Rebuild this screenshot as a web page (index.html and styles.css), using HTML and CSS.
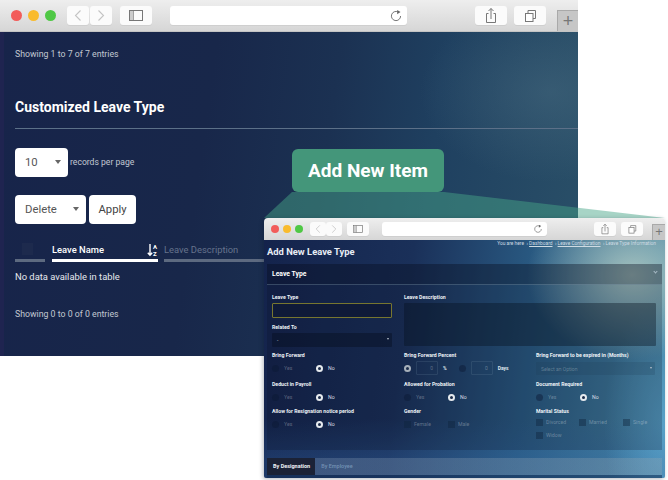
FILE: index.html
```html
<!DOCTYPE html>
<html lang="en">
<head>
<meta charset="utf-8">
<title>Add New Item</title>
<link rel="stylesheet" href="styles.css">
</head>
<body>
<svg class="defs" width="0" height="0" aria-hidden="true">
  <symbol id="i-back" viewBox="0 0 22 19"><path d="M13.5 4.5 8.5 9.5l5 5" fill="none" stroke="#c4c4c4" stroke-width="1.1"/></symbol>
  <symbol id="i-fwd" viewBox="0 0 22 19"><path d="M8.5 4.5l5 5-5 5" fill="none" stroke="#c4c4c4" stroke-width="1.1"/></symbol>
  <symbol id="i-side" viewBox="0 0 32 19"><rect x="9.5" y="4.500" width="13" height="10" fill="none" stroke="#777" stroke-width="1"/><path d="M13.500 4.500v10" stroke="#777"/><path d="M10 5h3.500v9H10z" fill="#ccc"/></symbol>
  <symbol id="i-reload" viewBox="0 0 14 14"><path d="M9.700 3.300A4.600 4.600 0 1 0 11.600 7" fill="none" stroke="#777" stroke-width="1"/><path d="M8.200 1v4.200l3.300-2.300z" fill="#666"/></symbol>
  <symbol id="i-share" viewBox="0 0 32 19"><path d="M13.500 7.500h-2v9h9v-9h-2" fill="none" stroke="#777"/><path d="M16 13V2.500M13.500 5 16 2.500 18.500 5" fill="none" stroke="#777"/></symbol>
  <symbol id="i-tabs" viewBox="0 0 32 19"><rect x="11.500" y="7.500" width="7.500" height="8" fill="#fff" stroke="#777"/><path d="M14 7V4.500h7.500v8H19" fill="none" stroke="#777"/></symbol>
</svg>

<main class="stage">
  <section class="window window-back">
    <header class="chrome">
      <span class="light light-red"></span><span class="light light-amber"></span><span class="light light-green"></span>
      <span class="nav">
        <span class="btn btn-nav"><svg class="ico"><use href="#i-back"/></svg></span>
        <span class="btn btn-nav"><svg class="ico"><use href="#i-fwd"/></svg></span>
      </span>
      <span class="btn btn-side"><svg class="ico"><use href="#i-side"/></svg></span>
      <span class="url"><svg class="reload"><use href="#i-reload"/></svg></span>
      <span class="btn btn-share"><svg class="ico"><use href="#i-share"/></svg></span>
      <span class="btn btn-tabs"><svg class="ico"><use href="#i-tabs"/></svg></span>
      <span class="plus">+</span>
    </header>
    <div class="page">
      <p class="info info-top">Showing 1 to 7 of 7 entries</p>
      <h2 class="section-title">Customized Leave Type</h2>
      <div class="per-page">
        <span class="field field-len">10<i class="caret"></i></span>
        <span class="per-label">records per page</span>
      </div>
      <div class="bulk">
        <span class="field field-bulk">Delete<i class="caret"></i></span>
        <span class="field field-apply">Apply</span>
      </div>
      <div class="table-head">
        <div class="col col-check"><span class="check"></span></div>
        <div class="col col-name">
          <span>Leave Name</span>
          <svg class="sort" viewBox="0 0 11 14"><path d="M3 1v11M.8 9.800 3 12.300l2.200-2.500" fill="none" stroke="#fff" stroke-width="1.400"/><text x="6" y="6" class="sort-text">A</text><text x="6" y="13" class="sort-text">Z</text></svg>
        </div>
        <div class="col col-desc"><span>Leave Description</span></div>
      </div>
      <p class="empty">No data available in table</p>
      <p class="info info-bottom">Showing 0 to 0 of 0 entries</p>
    </div>
  </section>

  <svg class="wedge" viewBox="0 0 668 480" aria-hidden="true"><polygon points="292,192 444,192 665,218 264,218"/></svg>

  <div class="callout">Add New Item</div>

  <section class="window window-front">
    <header class="chrome chrome-sm">
      <span class="light light-red"></span><span class="light light-amber"></span><span class="light light-green"></span>
      <span class="nav">
        <span class="btn btn-nav"><svg class="ico"><use href="#i-back"/></svg></span>
        <span class="btn btn-nav"><svg class="ico"><use href="#i-fwd"/></svg></span>
      </span>
      <span class="btn btn-side"><svg class="ico"><use href="#i-side"/></svg></span>
      <span class="url"><svg class="reload"><use href="#i-reload"/></svg></span>
      <span class="btn btn-share"><svg class="ico"><use href="#i-share"/></svg></span>
      <span class="btn btn-tabs"><svg class="ico"><use href="#i-tabs"/></svg></span>
      <span class="plus">+</span>
    </header>
    <div class="app">
      <div class="app-top">
        <h1 class="app-title">Add New Leave Type</h1>
        <nav class="crumbs">You are here &nbsp;&rsaquo; <u>Dashboard</u> &nbsp;&rsaquo; <u>Leave Configuration</u> &nbsp;&rsaquo; <span>Leave Type Information</span></nav>
      </div>
      <div class="panel">
        <div class="panel-head"><span>Leave Type</span><i class="chev"></i></div>
        <div class="form">
          <div class="cell cell-type">
            <label class="lbl">Leave Type</label>
            <span class="input input-focus"></span>
          </div>
          <div class="cell cell-desc">
            <label class="lbl">Leave Description</label>
            <span class="textarea"></span>
          </div>
          <div class="cell cell-rel">
            <label class="lbl">Related To</label>
            <span class="input input-select">-<i class="caret caret-sm"></i></span>
          </div>

          <div class="cell">
            <label class="lbl">Bring Forward</label>
            <div class="opts opts-radio"><span class="opt"><i class="radio"></i>Yes</span><span class="opt opt-on"><i class="radio on"></i>No</span></div>
          </div>
          <div class="cell">
            <label class="lbl">Bring Forward Percent</label>
            <div class="percent">
              <i class="radio on dim"></i><span class="num">0</span><b>%</b>
              <i class="radio"></i><span class="num">0</span><b>Days</b>
            </div>
          </div>
          <div class="cell">
            <label class="lbl">Bring Forward to be expired in (Months)</label>
            <span class="input input-option">Select an Option<i class="caret caret-sm"></i></span>
          </div>

          <div class="cell">
            <label class="lbl">Deduct in Payroll</label>
            <div class="opts opts-radio"><span class="opt"><i class="radio"></i>Yes</span><span class="opt opt-on"><i class="radio on"></i>No</span></div>
          </div>
          <div class="cell">
            <label class="lbl">Allowed for Probation</label>
            <div class="opts opts-radio"><span class="opt"><i class="radio"></i>Yes</span><span class="opt opt-on"><i class="radio on"></i>No</span></div>
          </div>
          <div class="cell">
            <label class="lbl">Document Required</label>
            <div class="opts opts-radio"><span class="opt"><i class="radio"></i>Yes</span><span class="opt opt-on"><i class="radio on"></i>No</span></div>
          </div>

          <div class="cell">
            <label class="lbl">Allow for Resignation notice period</label>
            <div class="opts opts-radio"><span class="opt"><i class="radio"></i>Yes</span><span class="opt opt-on"><i class="radio on"></i>No</span></div>
          </div>
          <div class="cell">
            <label class="lbl">Gender</label>
            <div class="opts opts-check"><span class="opt"><i class="box"></i>Female</span><span class="opt"><i class="box"></i>Male</span></div>
          </div>
          <div class="cell">
            <label class="lbl">Marital Status</label>
            <div class="marital"><span class="opt"><i class="box"></i>Divorced</span><span class="opt"><i class="box"></i>Married</span><span class="opt"><i class="box"></i>Single</span><span class="opt"><i class="box"></i>Widow</span></div>
          </div>
        </div>
      </div>
      <div class="tabs"><span class="tab tab-active">By Designation</span><span class="tab">By Employee</span></div>
    </div>
  </section>
</main>
</body>
</html>
```

FILE: styles.css
```css
* { box-sizing: border-box; }
html, body { margin: 0; padding: 0; background: #fff; }
body { font-family: Roboto, "Liberation Sans", sans-serif; overflow: hidden; }
.defs { display: block; height: 0; }
.stage { position: relative; width: 668px; height: 480px; overflow: hidden; }
p, h1, h2 { margin: 0; }

/* windows */
.window { position: absolute; display: flex; flex-direction: column; overflow: hidden; }
.window-back { left: 0; top: 0; width: 578px; height: 356px; }
.window-front { left: 264px; top: 218px; width: 401px; height: 260px; border-radius: 4px 4px 2px 2px; box-shadow: -1px 1px 4px rgba(10, 20, 40, .3); }

/* browser chrome */
.chrome { display: flex; align-items: center; flex: none; position: relative; height: 32px; padding: 0 0 0 11px; background: linear-gradient(#eeeeee, #d6d6d6); border-bottom: 1px solid #c4c4c4; }
.light { flex: none; width: 11px; height: 11px; margin-right: 6px; border-radius: 50%; }
.light-red { background: #f25c5a; }
.light-amber { background: #f9bb2d; }
.light-green { background: #4fc845; }
.nav { display: flex; gap: 1px; margin-left: 5px; }
.btn { flex: none; display: block; height: 19px; background: #fbfbfb; border-radius: 3px; box-shadow: 0 1px 0 #cfcfcf; }
.btn-nav { width: 22px; }
.ico { display: block; width: 100%; height: 100%; }
.btn-side { width: 32px; margin-left: 8px; }
.url { flex: none; display: flex; align-items: center; justify-content: flex-end; width: 237px; height: 19px; margin-left: 18px; padding-right: 4px; background: #fff; border-radius: 3px; box-shadow: 0 1px 0 #cfcfcf; }
.reload { width: 14px; height: 14px; }
.btn-share { width: 32px; margin-left: 68px; }
.btn-tabs { width: 32px; margin-left: 7px; }
.plus { position: absolute; right: 0; bottom: 0; width: 21px; height: 21px; background: #c6c6c6; border: 1px solid #a9a9a9; border-right: 0; border-bottom: 0; color: #777; font: 300 18px/20px "Liberation Sans", sans-serif; text-align: center; }

.chrome-sm { height: 22px; padding-left: 7px; border-bottom: 0; }
.chrome-sm .light { width: 8px; height: 8px; margin-right: 4px; }
.chrome-sm .nav { margin-left: 3px; gap: 0; }
.chrome-sm .btn { height: 14px; }
.chrome-sm .btn-nav { width: 16px; }
.chrome-sm .btn-side { width: 22px; margin-left: 5px; }
.chrome-sm .url { width: 165px; height: 14px; margin-left: 13px; }
.chrome-sm .reload { width: 10px; height: 10px; }
.chrome-sm .btn-share { width: 22px; margin-left: 47px; }
.chrome-sm .btn-tabs { width: 22px; margin-left: 5px; }
.chrome-sm .plus { width: 13px; height: 16px; font-size: 13px; line-height: 14px; }

/* back page */
.page { flex: 1; position: relative; padding: 17px 0 0 15px; color: #fff;
  background:
    radial-gradient(130px 90px at 550px 60px, rgba(80, 115, 135, .4), transparent),
    linear-gradient(90deg, #1f2450 0, #1f2450 4px, transparent 4px),
    linear-gradient(98deg, #17244a 0%, #18274a 35%, #1b3152 55%, #1f4060 72%, #2a5068 100%); }
.info { font-size: 8.750px; line-height: 11px; color: #c2c8d2; }
.section-title { margin-top: 38px; padding-bottom: 12px; font-size: 14px; line-height: 18px; font-weight: 700; border-bottom: 1px solid #5c7088; }
.per-page { display: flex; align-items: center; gap: 2px; margin-top: 19px; }
.per-label { margin-top: -2px; font-size: 8.600px; color: #c2c8d2; }
.field { position: relative; display: block; height: 29px; padding-left: 10px; background: #fff; border-radius: 4px; color: #555; font-size: 11.300px; line-height: 30px; }
.field-len { width: 53px; }
.bulk { display: flex; gap: 3px; margin-top: 18px; }
.field-bulk { width: 71px; }
.field-apply { width: 47px; padding: 0; text-align: center; color: #444; }
.caret { position: absolute; right: 7px; top: 12px; border: 3px solid transparent; border-top: 4px solid #666; border-bottom: 0; }
.table-head { display: flex; gap: 6px; margin-top: 19px; height: 19px; font-size: 9.400px; line-height: 12px; }
.col { height: 19px; padding-top: 1px; border-bottom: 3px solid #5d6a80; }
.col-check { width: 30px; margin-right: 1px; padding: 0 0 0 7px; }
.check { display: block; width: 11px; height: 12px; background: #1d2a4d; }
.col-name { display: flex; justify-content: space-between; width: 106px; padding-top: 0; border-bottom-color: #fff; font-weight: 500; }
.col-name span { margin-top: 1px; }
.sort { display: block; width: 11px; height: 14px; }
.sort-text { font: 700 6px Roboto, sans-serif; fill: #fff; }
.col-desc { width: 100px; flex: none; color: #66738c; white-space: nowrap; border-bottom-color: #5d6a80; }
.empty { margin-top: 9px; font-size: 9.400px; line-height: 12px; color: #e6e9ee; }
.info-bottom { margin-top: 26px; }

/* wedge + callout */
.wedge { position: absolute; left: 0; top: 0; width: 668px; height: 480px; }
.wedge polygon { fill: rgba(72, 165, 135, .48); }
.callout { position: absolute; left: 292px; top: 149px; width: 152px; height: 43px; background: #44967a; border-radius: 6px; color: #fff; font-size: 19px; line-height: 44px; font-weight: 700; text-align: center; }

/* front app */
.app { flex: 1; display: flex; flex-direction: column; padding: 0 3px; color: #fff;
  background:
    radial-gradient(105px 85px at 368px 35px, rgba(190, 212, 200, .8), transparent),
    radial-gradient(60px 130px at 400px 185px, rgba(100, 180, 225, .55), transparent),
    linear-gradient(180deg, transparent 75%, rgba(50, 100, 160, .3) 92%),
    linear-gradient(97deg, #14234c 0%, #1a3059 35%, #2a5c84 65%, #4a8aa8 100%); }
.app-top { display: flex; justify-content: space-between; height: 24px; }
.app-title { margin-top: 5px; font-size: 9.400px; line-height: 13px; font-weight: 700; color: #e8edf4; }
.crumbs { margin: 1px 6px 0 0; font-size: 4.850px; line-height: 6px; color: #cfdbe3; white-space: nowrap; }
.panel { height: 186px; background: rgba(8, 14, 30, .22); }
.panel-head { position: relative; display: flex; align-items: center; height: 21px; padding-left: 5px; font-size: 6.800px; font-weight: 700; background: rgba(6, 12, 26, .2); border-bottom: 1px solid rgba(150, 180, 200, .3); }
.chev { position: absolute; right: 5px; top: 6px; width: 3px; height: 3px; border: solid #a8bcc6; border-width: 0 1px 1px 0; transform: rotate(45deg); }
.form { display: grid; grid-template-columns: 120px 120px 121px; column-gap: 12px; grid-template-rows: 30px 28px 29px 27px 27px; padding: 9px 5px 0; }
.cell { display: flex; flex-direction: column; min-width: 0; }
.cell-type { grid-column: 1; grid-row: 1; }
.cell-desc { grid-column: 2 / span 2; grid-row: 1 / span 2; }
.cell-rel { grid-column: 1; grid-row: 2; }
.lbl { display: block; height: 9px; font-size: 5.200px; line-height: 7px; font-weight: 700; color: #eef2f6; white-space: nowrap; }
.input { position: relative; display: block; flex: none; width: 120px; height: 14px; border-radius: 1px; font-size: 5px; line-height: 14px; padding-left: 5px; }
.input-focus { height: 15px; border: 1px solid #77762f; background: #0f1a38; }
.input-select { background: rgba(6, 12, 28, .4); color: #c9cfd8; }
.input-option { width: 119px; height: 13px; margin-top: 1px; background: rgba(30, 60, 85, .2); color: rgba(255, 255, 255, .28); }
.caret-sm { right: 3px; top: 5px; border-width: 1.500px; border-top: 2px solid #b6bfc9; border-bottom: 0; }
.textarea { display: block; width: 252px; height: 43px; background: rgba(6, 16, 30, .38); border-radius: 1px; }
.opts { display: flex; margin-top: 3px; }
.opt { display: flex; align-items: center; gap: 5px; font-size: 5.200px; line-height: 8px; color: rgba(255, 255, 255, .3); white-space: nowrap; }
.opt-on { color: #d6dce4; }
.opts-radio .opt { width: 44px; }
.radio { flex: none; display: block; width: 7px; height: 7px; border-radius: 50%; background: rgba(10, 25, 50, .45); }
.radio.on { background: #1c2c4a; border: 2px solid #e6eaee; }
.radio.dim { border-color: #a7b0ba; }
.percent { display: flex; align-items: center; gap: 5px; margin-top: 0; height: 14px; }
.percent b { font-size: 5px; color: #dfe5ec; }
.percent b:nth-of-type(1) { margin-right: 7px; }
.num { display: block; width: 22px; height: 14px; padding-right: 4px; border: 1px solid rgba(120, 150, 170, .18); border-radius: 1px; font-size: 5px; line-height: 12px; text-align: right; color: rgba(255, 255, 255, .3); }
.box { flex: none; display: block; width: 7px; height: 7px; background: rgba(15, 35, 60, .42); }
.opts-check { margin-top: 3px; }
.opts-check .opt, .marital .opt { gap: 3px; }
.opts-check .opt { width: 44px; }
.marital { display: grid; grid-template-columns: 43px 44px 33px; row-gap: 5px; margin-top: 3px; }
.tabs { display: flex; height: 17px; margin-top: 8px; background: linear-gradient(90deg, rgba(150, 170, 195, .25), rgba(160, 170, 175, .28)); box-shadow: 0 3px 0 rgba(15, 40, 75, .5); }
.tab { padding: 0 5px 0 6px; font-size: 5.500px; line-height: 17px; font-weight: 500; color: rgba(150, 185, 215, .6); }
.tab-active { background: #1b2236; color: #eef1f5; font-weight: 700; }
```
